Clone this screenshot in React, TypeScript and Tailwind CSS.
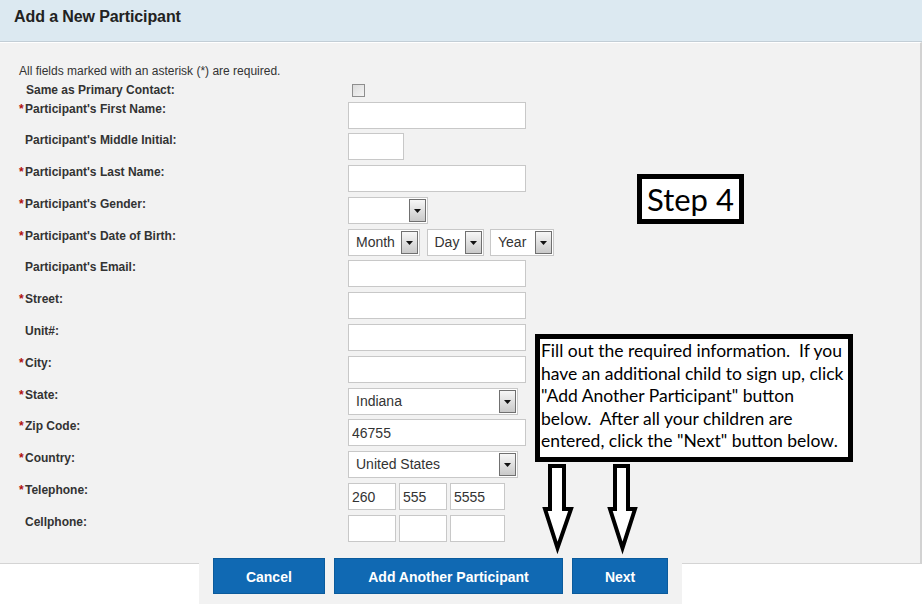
import type { ReactNode } from "react";

type Field =
  | { kind: "text"; width: string; value?: string }
  | { kind: "select"; width: string; value?: string }
  | { kind: "dob" }
  | { kind: "phone"; values: string[] };

type Row = { label: string; required: boolean; field: Field };

const rows: Row[] = [
  { label: "Participant's First Name:", required: true, field: { kind: "text", width: "w-[178px]" } },
  { label: "Participant's Middle Initial:", required: false, field: { kind: "text", width: "w-[56px]" } },
  { label: "Participant's Last Name:", required: true, field: { kind: "text", width: "w-[178px]" } },
  { label: "Participant's Gender:", required: true, field: { kind: "select", width: "w-[80px]" } },
  { label: "Participant's Date of Birth:", required: true, field: { kind: "dob" } },
  { label: "Participant's Email:", required: false, field: { kind: "text", width: "w-[178px]" } },
  { label: "Street:", required: true, field: { kind: "text", width: "w-[178px]" } },
  { label: "Unit#:", required: false, field: { kind: "text", width: "w-[178px]" } },
  { label: "City:", required: true, field: { kind: "text", width: "w-[178px]" } },
  { label: "State:", required: true, field: { kind: "select", width: "w-[170px]", value: "Indiana" } },
  { label: "Zip Code:", required: true, field: { kind: "text", width: "w-[178px]", value: "46755" } },
  { label: "Country:", required: true, field: { kind: "select", width: "w-[170px]", value: "United States" } },
  { label: "Telephone:", required: true, field: { kind: "phone", values: ["260", "555", "5555"] } },
  { label: "Cellphone:", required: false, field: { kind: "phone", values: ["", "", ""] } },
];

const phoneWidths = ["w-[48px]", "w-[48px]", "w-[55px]"];

function TextBox({ width, value }: { width: string; value?: string }) {
  return (
    <input
      type="text"
      defaultValue={value}
      className={`${width} h-[27px] border border-[#c8c8c8] bg-white px-[3px] text-[14px] text-[#333] outline-none`}
    />
  );
}

function SelectBox({ width, value }: { width: string; value?: string }) {
  return (
    <div className={`${width} flex h-[27px] items-center border border-[#c8c8c8] bg-white pl-[7px] pr-[1px]`}>
      <span className="flex-1 truncate text-[14px] text-[#333]">{value}</span>
      <span className="flex h-[23px] w-[17px] items-center justify-center border border-[#707070] bg-gradient-to-b from-[#f7f7f7] to-[#c9c9c9] pt-[1px]">
        <svg width="7" height="4" viewBox="0 0 7 4">
          <path d="M0 0H7L3.5 4Z" fill="#111" />
        </svg>
      </span>
    </div>
  );
}

function FieldView({ field }: { field: Field }) {
  if (field.kind === "text") return <TextBox width={field.width} value={field.value} />;
  if (field.kind === "select") return <SelectBox width={field.width} value={field.value} />;
  if (field.kind === "dob") {
    return (
      <div className="flex gap-[6.5px]">
        <SelectBox width="w-[72px]" value="Month" />
        <SelectBox width="w-[57px]" value="Day" />
        <SelectBox width="w-[64px]" value="Year" />
      </div>
    );
  }
  return (
    <div className="flex gap-[3px]">
      {field.values.map((v, i) => (
        <TextBox key={i} width={phoneWidths[i]} value={v} />
      ))}
    </div>
  );
}

function Label({ required, children }: { required: boolean; children: ReactNode }) {
  return (
    <div className="flex w-[348px] shrink-0 pl-[19px] text-[12px] font-bold leading-[14px] text-[#333]">
      <span className="w-[6px] text-[#b01010]">{required ? "*" : ""}</span>
      <span>{children}</span>
    </div>
  );
}

function BlueButton({ width, children }: { width: string; children: ReactNode }) {
  return (
    <button
      type="button"
      className={`${width} h-[36px] border border-[#0b5b9c] bg-[#1069b3] pt-[2px] text-[14px] font-bold text-white`}
    >
      {children}
    </button>
  );
}

export default function App() {
  return (
    <div className="relative h-[606px] w-[922px] overflow-hidden bg-white font-['Liberation_Sans',Arial,sans-serif]">
      <div className="box-border flex h-[42px] items-center border-b border-[#c3ced6] bg-[#dce9f1] pl-[14px]">
        <h1 className="mb-[8px] text-[16px] font-bold tracking-[-0.1px] text-[#222]">Add a New Participant</h1>
      </div>

      <div className="box-border h-[522px] border-t border-r-2 border-b border-t-white border-r-[#d2d2d2] border-b-[#d4d4d4] bg-[#f2f2f2] pt-[21px]">
        <p className="pl-[19px] text-[12px] leading-[14px] text-[#333]">
          All fields marked with an asterisk (*) are required.
        </p>
        <div className="mt-[5px] flex h-[18.5px]">
          <div className="w-[348px] shrink-0 pl-[26px] text-[12px] font-bold leading-[14px] text-[#333]">
            Same as Primary Contact:
          </div>
          <span className="ml-[4px] mt-[1px] h-[13px] w-[13px] border border-[#8e8e8e] bg-gradient-to-br from-[#dcdcdc] to-[#f4f4f4]" />
        </div>
        {rows.map((r) => (
          <div key={r.label} className="flex h-[31.8px] items-start">
            <Label required={r.required}>{r.label}</Label>
            <FieldView field={r.field} />
          </div>
        ))}
      </div>

      <div className="relative -mt-[16px] ml-[199px] flex w-[483px] gap-[9px] bg-[#f2f2f2] px-[14px] pb-[10px] pt-[10px]">
        <BlueButton width="w-[112px]">Cancel</BlueButton>
        <BlueButton width="w-[230px]">Add Another Participant</BlueButton>
        <BlueButton width="w-[96px]">Next</BlueButton>
      </div>

      {/* annotations drawn over the screenshot */}
      <div className="absolute left-[637px] top-[174px] flex h-[50px] w-[107px] items-center justify-center border-[5px] border-black bg-white font-['Lato',sans-serif] text-[31px] leading-none text-black">
        Step 4
      </div>

      <div className="absolute left-[535px] top-[334px] h-[128px] w-[318px] border-[5px] border-black bg-white pl-[1px] pt-[1px] font-['Lato',sans-serif] text-[17.5px] leading-[22.6px] text-black">
        <div className="whitespace-pre">Fill out the required information.  If you</div>
        <div className="whitespace-pre">have an additional child to sign up, click</div>
        <div className="whitespace-pre">"Add Another Participant" button</div>
        <div className="whitespace-pre">below.  After all your children are</div>
        <div className="whitespace-pre">entered, click the "Next" button below.</div>
      </div>

      <svg className="absolute left-[540px] top-[460px]" width="100" height="100" viewBox="0 0 100 100">
        <path d="M10 6H24V49H31L17.5 88L5 49H10Z" fill="white" stroke="black" strokeWidth="4" />
        <path d="M75 6H88V49H95L82.5 88L70 49H75Z" fill="white" stroke="black" strokeWidth="4" />
      </svg>
    </div>
  );
}
